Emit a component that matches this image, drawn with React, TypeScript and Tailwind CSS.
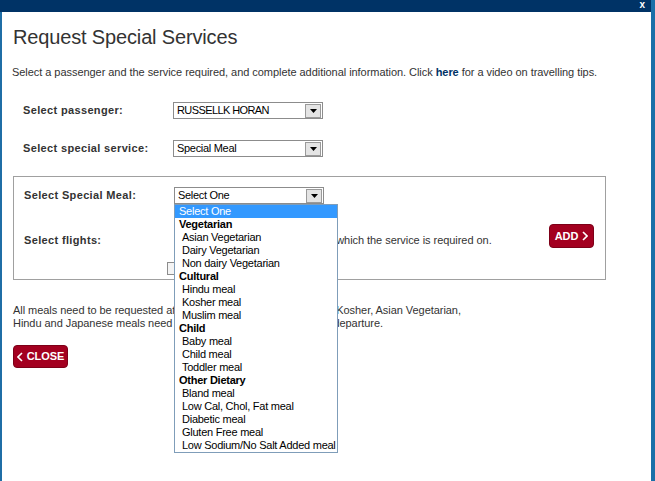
import React from "react";

const font = { fontFamily: '"Liberation Sans", Arial, sans-serif' };

function Arrow() {
  return (
    <div className="w-[16px] h-[14px] border border-[#9a9a9a] bg-[#e4e4e4] flex items-center justify-center">
      <svg width="7" height="4" viewBox="0 0 7 4">
        <path d="M0 0h7L3.5 4z" fill="#000" />
      </svg>
    </div>
  );
}

function FakeSelect({ value, tight }: { value: string; tight?: boolean }) {
  return (
    <div className="w-[150px] h-[17px] border border-[#8c8c8c] bg-white flex items-center justify-between pl-[3px] pr-[1px] text-[11px] text-black">
      <span className={tight ? "leading-[13px] tracking-[-0.6px]" : "leading-[13px] tracking-[-0.3px]"}>{value}</span>
      <Arrow />
    </div>
  );
}

function Chevron({ dir }: { dir: "l" | "r" }) {
  return (
    <svg width="6" height="10" viewBox="0 0 6 10">
      <path
        d={dir === "r" ? "M1 1l4 4-4 4" : "M5 1L1 5l4 4"}
        stroke="#fff"
        strokeWidth="1.6"
        fill="none"
      />
    </svg>
  );
}

const items: { t: string; k: "sel" | "grp" | "opt" }[] = [
  { t: "Select One", k: "sel" },
  { t: "Vegetarian", k: "grp" },
  { t: "Asian Vegetarian", k: "opt" },
  { t: "Dairy Vegetarian", k: "opt" },
  { t: "Non dairy Vegetarian", k: "opt" },
  { t: "Cultural", k: "grp" },
  { t: "Hindu meal", k: "opt" },
  { t: "Kosher meal", k: "opt" },
  { t: "Muslim meal", k: "opt" },
  { t: "Child", k: "grp" },
  { t: "Baby meal", k: "opt" },
  { t: "Child meal", k: "opt" },
  { t: "Toddler meal", k: "opt" },
  { t: "Other Dietary", k: "grp" },
  { t: "Bland meal", k: "opt" },
  { t: "Low Cal, Chol, Fat meal", k: "opt" },
  { t: "Diabetic meal", k: "opt" },
  { t: "Gluten Free meal", k: "opt" },
  { t: "Low Sodium/No Salt Added meal", k: "opt" },
];

export default function App() {
  return (
    <div
      className="relative w-[655px] h-[481px] bg-white flex overflow-hidden text-[#333] text-[11px] tracking-[-0.05px]"
      style={font}
    >
      {/* left strip */}
      <div className="w-[2px] flex flex-col">
        <div className="h-[12px] bg-[#003366]" />
        <div className="flex-1 bg-[#1f6ea6]" />
      </div>

      {/* main column */}
      <div className="flex-1 flex flex-col">
        <div className="h-[12px] bg-[#003366] flex justify-end pr-[6px]">
          <span className="text-white text-[10px] leading-[9px] font-bold">x</span>
        </div>

        <div className="pl-[10px] flex flex-col">
          <h1 className="ml-[1px] mt-[13px] text-[20px] leading-[24px] tracking-[-0.15px] text-[#333] font-normal">
            Request Special Services
          </h1>

          <p className="mt-[17px] leading-[13px]">
            Select a passenger and the service required, and complete additional information. Click{" "}
            <b className="text-[#003366]">here</b> for a video on travelling tips.
          </p>

          <div className="mt-[23px] pl-[11px] flex items-center">
            <span className="w-[150px] font-bold leading-[13px] tracking-[0.35px]">Select passenger:</span>
            <FakeSelect value="RUSSELLK HORAN" tight />
          </div>

          <div className="mt-[21px] pl-[11px] flex items-center">
            <span className="w-[150px] font-bold leading-[13px] tracking-[0.35px]">Select special service:</span>
            <FakeSelect value="Special Meal" />
          </div>

          <div className="ml-[1px] mt-[19px] w-[593px] border border-[#a0a0a0] pt-[10px] pl-[10px] pr-[11px] pb-[4px] flex flex-col">
            <div className="flex items-center">
              <span className="w-[150px] font-bold leading-[13px] tracking-[0.35px]">Select Special Meal:</span>
              <FakeSelect value="Select One" />
            </div>
            <div className="mt-[20px] flex items-start">
              <span className="w-[150px] mt-[10px] font-bold leading-[13px] tracking-[0.35px]">Select flights:</span>
              <span className="mt-[10px] leading-[13px]">
                Please select the flight segments which the service is required on.
              </span>
              <div className="ml-auto w-[45px] h-[24px] rounded-[4px] bg-[#a30020] border border-[#7d0018] flex items-center justify-center gap-[4px] text-white font-bold text-[11px]">
                <span>ADD</span>
                <Chevron dir="r" />
              </div>
            </div>
            <div className="mt-[14px] ml-[143px] w-[13px] h-[13px] border border-[#8c8c8c] bg-[#f4f4f4]" />
          </div>

          <p className="ml-[1px] mt-[24px] leading-[13px]">
            All meals need to be requested at least 24 hours before departure. Kosher, Asian Vegetarian,
            <br />
            Hindu and Japanese meals need to be requested 48 hours before departure.
          </p>

          <div className="ml-[1px] mt-[15px] w-[55px] h-[23px] rounded-[4px] bg-[#a30020] border border-[#7d0018] flex items-center justify-center gap-[4px] text-white font-bold text-[11px]">
            <Chevron dir="l" />
            <span>CLOSE</span>
          </div>
        </div>
      </div>

      {/* right strip */}
      <div className="w-[4px] bg-[#1a6fa8]" />

      {/* open dropdown list */}
      <div className="absolute left-[174px] top-[204px] w-[164px] h-[249px] border border-[#7f9db9] bg-white flex flex-col text-[11px] text-black tracking-[-0.25px] whitespace-nowrap">
        {items.map((it) => (
          <div
            key={it.t}
            className={
              it.k === "sel"
                ? "h-[13px] leading-[13px] pl-[4px] bg-[#3399ff] text-white"
                : it.k === "grp"
                ? "h-[13px] leading-[13px] pl-[4px] font-bold"
                : "h-[13px] leading-[13px] pl-[7px]"
            }
          >
            {it.t}
          </div>
        ))}
      </div>
    </div>
  );
}
